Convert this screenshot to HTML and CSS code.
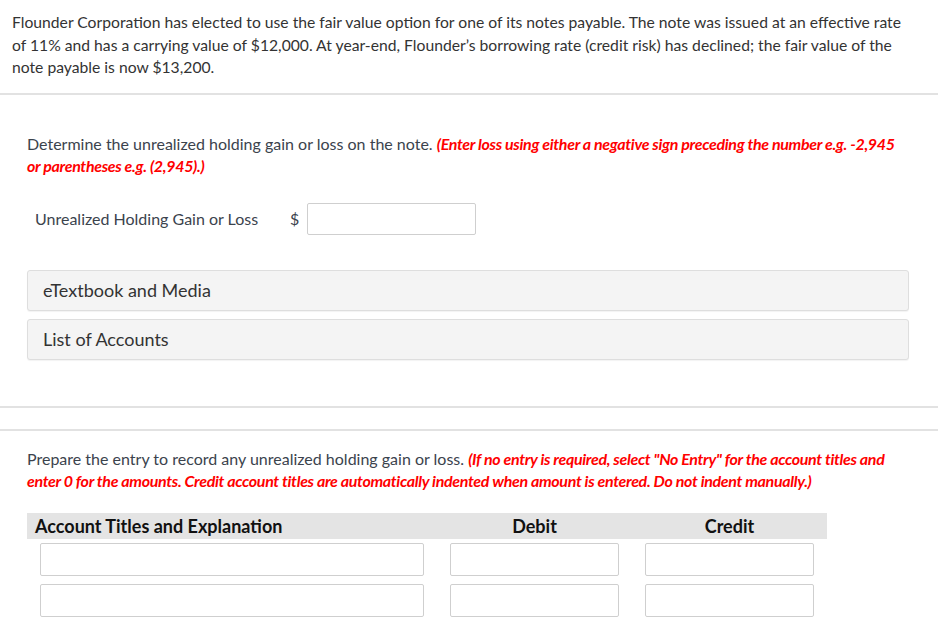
FILE: index.html
```html
<!DOCTYPE html>
<html>
<head>
<meta charset="utf-8">
<link rel="stylesheet" href="styles.css">
</head>
<body>
<div class="intro">
  <p>Flounder Corporation has elected to use the fair value option for one of its notes payable. The note was issued at an effective rate of 11% and has a carrying value of $12,000. At year-end, Flounder’s borrowing rate (credit risk) has declined; the fair value of the note payable is now $13,200.</p>
</div>
<hr class="rule rule-top">
<section class="part">
  <p class="question">Determine the unrealized holding gain or loss on the note. <em class="note">(Enter loss using either a negative sign preceding the number e.g. -2,945 or parentheses e.g. (2,945).)</em></p>
  <div class="answer-row">
    <span class="answer-label">Unrealized Holding Gain or Loss</span>
    <span class="currency">$</span>
    <span class="field field-answer"></span>
  </div>
  <div class="resources">
    <div class="resource">eTextbook and Media</div>
    <div class="resource">List of Accounts</div>
  </div>
</section>
<hr class="rule rule-mid">
<hr class="rule rule-second">
<section class="part part-two">
  <p class="question">Prepare the entry to record any unrealized holding gain or loss. <em class="note">(If no entry is required, select "No Entry" for the account titles and enter 0 for the amounts. Credit account titles are automatically indented when amount is entered. Do not indent manually.)</em></p>
  <div class="journal">
    <div class="jh jh-account">Account Titles and Explanation</div>
    <div class="jh jh-num">Debit</div>
    <div class="jh jh-num">Credit</div>
    <div class="jc"><span class="field"></span></div>
    <div class="jc"><span class="field"></span></div>
    <div class="jc"><span class="field"></span></div>
    <div class="jc"><span class="field"></span></div>
    <div class="jc"><span class="field"></span></div>
    <div class="jc"><span class="field"></span></div>
  </div>
</section>
</body>
</html>
```
FILE: styles.css
```css
* { box-sizing: border-box; }
html, body {
  margin: 0;
  padding: 0;
  background: #fff;
  font-family: Lato, "Open Sans", "Liberation Sans", sans-serif;
  color: #333;
}
p { margin: 0; }

.intro {
  padding: 11px 28px 0 12px;
  font-size: 15.7px;
  line-height: 22.5px;
  color: #333;
}

.rule {
  border: 0;
  border-top: 2px solid #e2e2e2;
  margin: 0;
}
.rule-top { margin-top: 14px; }
.rule-mid { margin-top: 46px; }
.rule-second { margin-top: 21px; }

.part {
  padding: 38px 29px 0 27px;
}
.part-two { padding-top: 17px; }

.question {
  font-size: 16px;
  line-height: 22px;
  color: #3b434d;
}
.note {
  color: #ff0000;
  font-weight: 700;
  letter-spacing: -0.33px;
}

.answer-row {
  display: flex;
  align-items: center;
  margin-top: 26px;
  padding-left: 8px;
  height: 32px;
  font-size: 16px;
  color: #3b434d;
}
.answer-label { width: 255px; }
.currency { width: 17px; }

.field {
  display: block;
  height: 33px;
  background: #fff;
  border: 1px solid #cfcfcf;
  border-radius: 2px;
}
.field-answer { width: 169px; height: 32px; }

.resources {
  margin-top: 35px;
  display: flex;
  flex-direction: column;
  gap: 8px;
}
.resource {
  height: 41px;
  display: flex;
  align-items: center;
  padding-left: 15px;
  background: #f4f4f4;
  border: 1px solid #dedede;
  border-radius: 3px;
  box-shadow: 0 1px 1px rgba(0,0,0,0.05);
  font-size: 18px;
  color: #333;
}

.journal {
  margin-top: 21px;
  width: 800px;
  display: grid;
  grid-template-columns: 410px 195px 195px;
  row-gap: 8px;
}
.jh {
  background: #e4e4e4;
  height: 26px;
  line-height: 26px;
  font-size: 18px;
  font-weight: 700;
  color: #111;
  margin-bottom: -4px;
}
.jh-account { padding-left: 8px; }
.jh-num { text-align: center; }
.jc { padding: 0 13px; }
```
